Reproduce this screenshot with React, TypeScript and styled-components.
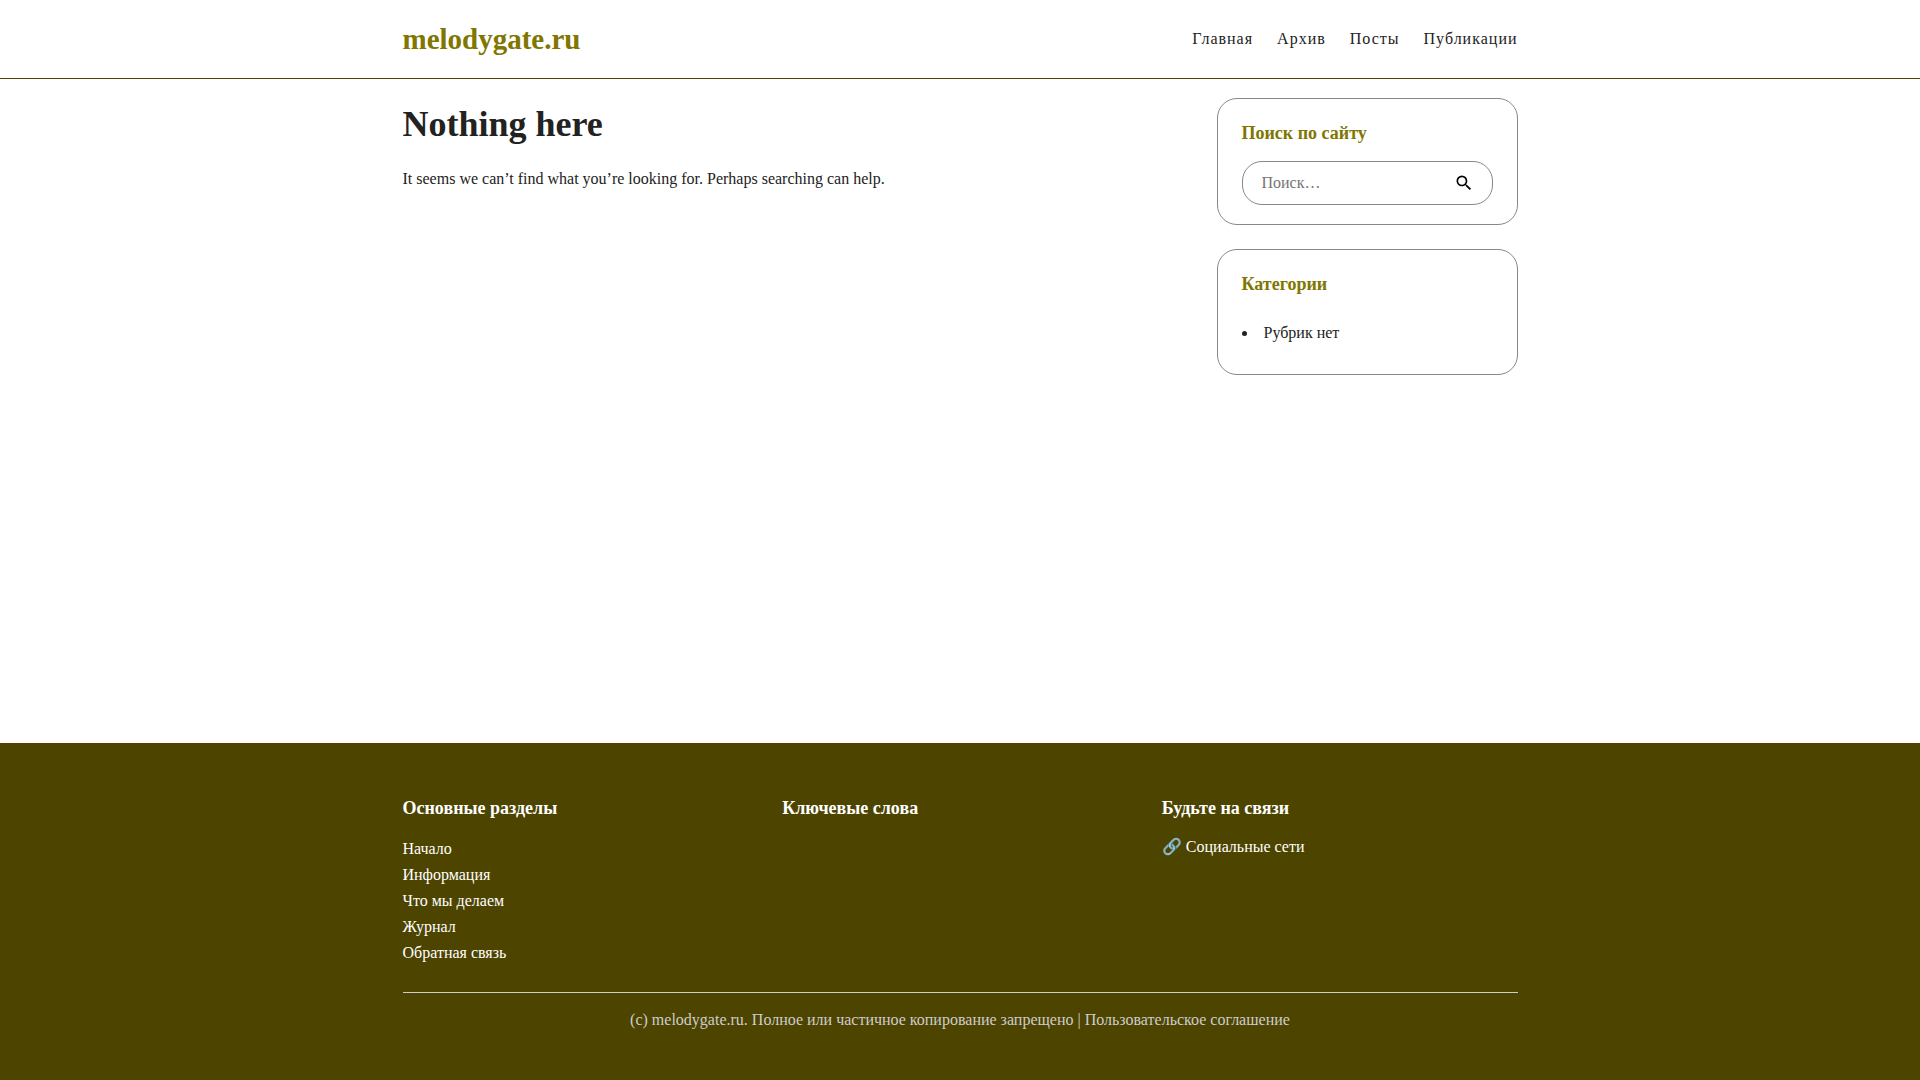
import React from "react";
import styled, { createGlobalStyle } from "styled-components";

const serif = '"Liberation Serif", "Times New Roman", serif';
const olive = "#807600";
const darkOlive = "#4d4400";

const GlobalStyle = createGlobalStyle`
  *, *::before, *::after { box-sizing: border-box; }
  body {
    margin: 0;
    background: #fff;
    color: #222;
    font-family: ${serif};
    font-size: 16px;
    line-height: 26px;
  }
`;

const Page = styled.div`
  display: flex;
  flex-direction: column;
  min-height: 100vh;
`;

const Container = styled.div`
  width: 100%;
  max-width: 1155px;
  margin: 0 auto;
  padding: 0 20px;
`;

const Header = styled.header`
  border-bottom: 1px solid ${darkOlive};
`;

const HeaderRow = styled(Container)`
  display: flex;
  align-items: center;
  justify-content: space-between;
  flex-wrap: wrap;
  gap: 16px;
  padding-top: 16px;
  padding-bottom: 16px;
`;

const Brand = styled.a`
  color: ${olive};
  font-size: 29px;
  line-height: 46px;
  font-weight: 700;
  text-decoration: none;
`;

const Nav = styled.nav`
  display: flex;
  flex-wrap: wrap;
  gap: 24px;
`;

const NavLink = styled.a`
  color: #222;
  letter-spacing: 1px;
  text-decoration: none;
`;

const Content = styled(Container)`
  display: grid;
  grid-template-columns: minmax(0, 1fr) 301px;
  gap: 32px;
  flex: 1 0 auto;
  align-content: start;
  padding-top: 19px;
  padding-bottom: 32px;

  @media (max-width: 800px) {
    grid-template-columns: minmax(0, 1fr);
  }
`;

const Title = styled.h1`
  margin: 0 0 16px;
  font-size: 36px;
  line-height: 52px;
`;

const Text = styled.p`
  margin: 0;
`;

const Sidebar = styled.aside`
  display: flex;
  flex-direction: column;
  gap: 24px;
`;

const Widget = styled.section`
  padding: 20px 24px 19px;
  border: 1px solid #888;
  border-radius: 20px;
`;

const WidgetTitle = styled.h2`
  margin: 0 0 13px;
  color: ${olive};
  font-size: 18px;
  line-height: 29px;
`;

const SearchForm = styled.form`
  display: flex;
  align-items: center;
  height: 44px;
  padding: 0 18px 0 19px;
  border: 1px solid #888;
  border-radius: 20px;
`;

const SearchInput = styled.input`
  flex: 1;
  min-width: 0;
  padding: 0;
  border: 0;
  outline: 0;
  background: transparent;
  color: #222;
  font: inherit;

  &::placeholder {
    color: #757575;
    opacity: 1;
  }
`;

const SearchButton = styled.button`
  display: flex;
  padding: 0;
  border: 0;
  background: transparent;
  color: #000;
  cursor: pointer;
`;

const CategoryList = styled.ul`
  margin: 0;
  padding: 8px 0 9px;
  list-style-position: inside;
`;

const Footer = styled.footer`
  padding: 50px 0 47px;
  background: ${darkOlive};
  color: #fff;
`;

const FooterColumns = styled.div`
  display: grid;
  grid-template-columns: repeat(auto-fit, minmax(240px, 1fr));
  gap: 24px;
  padding-bottom: 24px;
  border-bottom: 1px solid #ccc;
`;

const FooterTitle = styled.h2`
  margin: 0 0 11px;
  font-size: 18px;
  line-height: 30px;
`;

const FooterList = styled.ul`
  margin: 0;
  padding: 2px 0;
  list-style: none;
`;

const FooterLink = styled.a`
  color: #fff;
  text-decoration: none;
`;

const Copyright = styled.p`
  margin: 14px 0 0;
  color: #ccc;
  text-align: center;
`;

const navItems = ["Главная", "Архив", "Посты", "Публикации"];
const sections = ["Начало", "Информация", "Что мы делаем", "Журнал", "Обратная связь"];

export default function App() {
  return (
    <Page>
      <GlobalStyle />
      <Header>
        <HeaderRow>
          <Brand href="#">melodygate.ru</Brand>
          <Nav>
            {navItems.map((item) => (
              <NavLink key={item} href="#">{item}</NavLink>
            ))}
          </Nav>
        </HeaderRow>
      </Header>
      <Content>
        <main>
          <Title>Nothing here</Title>
          <Text>It seems we can’t find what you’re looking for. Perhaps searching can help.</Text>
        </main>
        <Sidebar>
          <Widget>
            <WidgetTitle>Поиск по сайту</WidgetTitle>
            <SearchForm role="search" onSubmit={(e) => e.preventDefault()}>
              <SearchInput type="search" aria-label="Поиск" placeholder="Поиск…" />
              <SearchButton type="submit" aria-label="Поиск">
                <svg width="20" height="20" viewBox="0 0 24 24" fill="currentColor" aria-hidden="true">
                  <path d="M15.5 14h-.79l-.28-.27A6.47 6.47 0 0 0 16 9.5 6.5 6.5 0 1 0 9.5 16c1.61 0 3.09-.59 4.23-1.57l.27.28v.79l5 4.99L20.49 19l-4.99-5zm-6 0C7.01 14 5 11.99 5 9.5S7.01 5 9.5 5 14 7.01 14 9.5 11.99 14 9.5 14z" />
                </svg>
              </SearchButton>
            </SearchForm>
          </Widget>
          <Widget>
            <WidgetTitle>Категории</WidgetTitle>
            <CategoryList>
              <li>Рубрик нет</li>
            </CategoryList>
          </Widget>
        </Sidebar>
      </Content>
      <Footer>
        <Container>
          <FooterColumns>
            <section>
              <FooterTitle>Основные разделы</FooterTitle>
              <FooterList>
                {sections.map((item) => (
                  <li key={item}><FooterLink href="#">{item}</FooterLink></li>
                ))}
              </FooterList>
            </section>
            <section>
              <FooterTitle>Ключевые слова</FooterTitle>
            </section>
            <section>
              <FooterTitle>Будьте на связи</FooterTitle>
              <FooterLink href="#">🔗 Социальные сети</FooterLink>
            </section>
          </FooterColumns>
          <Copyright>(c) melodygate.ru. Полное или частичное копирование запрещено | Пользовательское соглашение</Copyright>
        </Container>
      </Footer>
    </Page>
  );
}
